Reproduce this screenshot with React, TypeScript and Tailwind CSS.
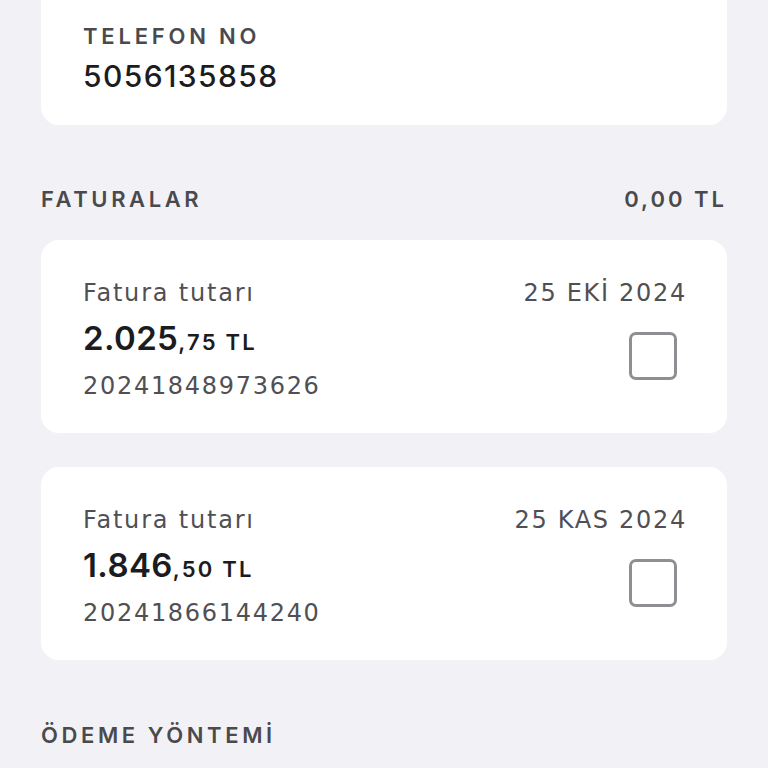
const body = { fontFamily: '"DejaVu Sans", "Noto Sans", sans-serif' }
const head = { fontFamily: 'Inter, "Noto Sans", sans-serif' }

type Invoice = { date: string; whole: string; fraction: string; no: string }

const invoices: Invoice[] = [
  { date: '25 EKİ 2024', whole: '2.025', fraction: ',75 TL', no: '20241848973626' },
  { date: '25 KAS 2024', whole: '1.846', fraction: ',50 TL', no: '20241866144240' },
]

function InvoiceCard({ inv }: { inv: Invoice }) {
  return (
    <div className="bg-white rounded-[18px] h-[193px] px-[42px] pt-[38px] flex justify-between">
      <div className="flex flex-col">
        <span className="text-[24px] leading-[30px] tracking-[1.8px] text-[#505054]">Fatura tutarı</span>
        <span style={head} className="mt-[14px] leading-[32px] text-[#1c1c1e] font-semibold">
          <span className="text-[33px] tracking-[0.4px]">{inv.whole}</span>
          <span className="text-[22px] tracking-[2.2px]">{inv.fraction}</span>
        </span>
        <span className="mt-[11px] text-[24px] leading-[30px] tracking-[1.7px] text-[#505054]">{inv.no}</span>
      </div>
      <div className="flex flex-col items-end">
        <span className="text-[24px] leading-[30px] tracking-[1.7px] -mr-[2px] text-[#505054]">{inv.date}</span>
        <div className="mt-[24px] mr-[8px] w-[48px] h-[48px] rounded-[7px] border-[3px] border-[#8e8e93]" />
      </div>
    </div>
  )
}

export default function App() {
  return (
    <div style={body} className="w-[768px] h-[768px] overflow-hidden bg-[#f2f2f6] px-[41px]">
      <div className="bg-white rounded-[18px] -mt-[20px] h-[145px] pl-[42px] pt-[42px] flex flex-col">
        <span style={head} className="text-[22px] leading-[28px] font-semibold tracking-[3.8px] text-[#4a4a4e]">TELEFON NO</span>
        <span style={head} className="mt-[9px] text-[30px] leading-[34px] font-medium tracking-[1.4px] text-[#1c1c1e]">5056135858</span>
      </div>

      <div style={head} className="flex justify-between items-center mt-[60px] h-[28px]">
        <span className="text-[22px] font-semibold tracking-[3.6px] text-[#4a4a4e]">FATURALAR</span>
        <span className="text-[22px] font-semibold tracking-[3px] text-[#4a4a4e]">0,00 TL</span>
      </div>

      <div className="mt-[27px] flex flex-col gap-[34px]">
        {invoices.map(inv => (
          <InvoiceCard key={inv.no} inv={inv} />
        ))}
      </div>

      <div style={head} className="mt-[61px] h-[28px] flex items-center">
        <span className="text-[22px] font-semibold tracking-[3.6px] text-[#4a4a4e]">ÖDEME YÖNTEMİ</span>
      </div>
    </div>
  )
}
